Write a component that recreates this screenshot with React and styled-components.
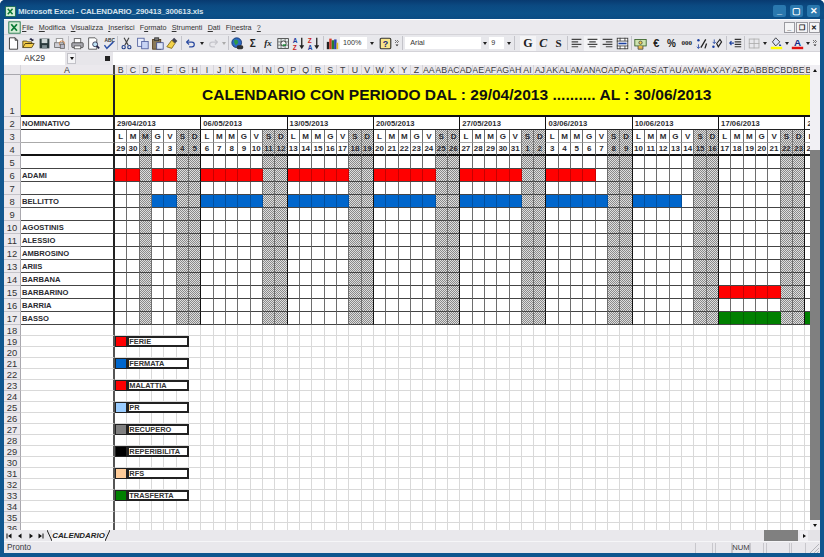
import React from 'react';
import styled, { createGlobalStyle } from 'styled-components';

const Global = createGlobalStyle`
  html, body { margin: 0; padding: 0; background: #fff; }
  * { box-sizing: border-box; }
`;
const Win = styled.div`
  width: 824px; height: 557px; display: flex; flex-direction: column; overflow: hidden;
  background: #10578f; border-radius: 5px 5px 0 0; padding: 0 4px 4px;
  font-family: "Liberation Sans", Arial, sans-serif; color: #222;
`;
const TitleBar = styled.div`
  height: 19px; margin: 0 -4px; padding: 3px 4px 0 5px; display: flex; align-items: center; gap: 2px;
  background: linear-gradient(#083a70 0, #0b4a82 30%, #0c5189 70%, #0b4c84 100%);
`;
const TitleText = styled.span`
  flex: 1; font-size: 7.9px; font-weight: 700; color: #d5e2ec; white-space: nowrap; letter-spacing: -0.02em;
`;
const CapBtn = styled.div`
  width: 13px; height: 12px; margin-left: 2px; background: #2a78ae; border-radius: 2px;
  color: #fff; font-size: 9px; font-weight: 700; display: flex; align-items: center; justify-content: center;
`;
const MenuBar = styled.div`
  height: 16px; background: #ebeaee; border-top: 1px solid #fff; border-bottom: 1px solid #d4d3d8;
  display: flex; align-items: center; padding-left: 4px;
`;
const MenuItems = styled.div`
  display: flex; gap: 5.2px; margin-left: 1px; flex: 1;
`;
const MenuItem = styled.span`
  font-size: 7.2px; color: #333; white-space: nowrap;
`;
const Key = styled.span` text-decoration: underline; `;
const DocBtns = styled.div` display: flex; gap: 1px; `;
const DocBtn = styled.div`
  width: 11.5px; height: 11px; background: #f4f4f6; border: 1px solid #9a9aa0; color: #111;
  font-size: 7px; font-weight: 700; line-height: 9px; text-align: center;
`;
const ToolBar = styled.div`
  height: 17px; background: #e8e8ec; border-bottom: 1px solid #d4d3d8; display: flex; align-items: center; padding-left: 2px;
`;
const Btn = styled.div`
  width: ${p => p.$w || 15.3}px; height: 15px; flex: none; display: flex; align-items: center; justify-content: center;
  background: ${p => p.$on ? '#f4f4f6' : 'transparent'}; overflow: hidden;
`;
const Sep = styled.div`
  width: ${p => p.$w || 3}px; height: 14px; flex: none;
  &::after { content: ""; display: block; width: 1px; height: 14px; background: #c4c4ca; margin-left: 1px; }
`;
const Caret = styled.div`
  width: ${p => p.$w || 8}px; flex: none; display: flex; justify-content: center;
  &::after { content: ""; border-left: 2.5px solid transparent; border-right: 2.5px solid transparent; border-top: 3px solid ${p => p.$dim ? '#aaa' : '#222'}; }
`;
const Combo = styled.div`
  width: ${p => p.$w}px; height: 12px; flex: none; background: #fff; font-size: 7.2px; color: #333; padding-left: ${p => p.$pad || 2}px; line-height: 12px; overflow: hidden;
`;
const TextTool = styled.span`
  font-family: ${p => p.$serif ? '"Liberation Serif", serif' : '"Liberation Sans", sans-serif'};
  font-size: ${p => p.$s || 11}px; font-weight: 700; font-style: ${p => p.$i ? 'italic' : 'normal'}; color: ${p => p.$c || '#222'};
`;
const FormulaBar = styled.div` height: 13px; background: #e7e6ea; display: flex; `;
const NameBox = styled.div`
  width: 61px; background: #fff; font-size: 8.6px; color: #333; text-align: center; line-height: 13px;
`;
const NameGrey = styled.div` flex: 1; display: flex; align-items: center; padding-left: 2px; `;
const Formula = styled.div` width: 707px; background: #fff; `;
const Square = styled.div` width: 4.5px; height: 4.5px; background: #222; margin-left: 29px; `;
const NameCaretBox = styled.div`
  width: 9px; height: 11px; background: #f4f4f6; border: 1px solid #c2c2c8; display: flex; align-items: center; justify-content: center;
`;
const SheetArea = styled.div` height: 465px; display: flex; background: #fff; `;
const Sheet = styled.div`
  width: 806px; height: 465px; overflow: hidden; display: grid;
  grid-template-columns: 17px 94px repeat(57, 12.33px);
  grid-template-rows: 10px 42px repeat(16, 13px) repeat(19, 11px);
  font-size: 7.6px; font-weight: 700;
`;
const HeadCell = styled.div`
  background: #ebe9ed; border-right: 1px solid #d6d5da; border-bottom: 1px solid #a9a8ae;
  font-size: 8.8px; font-weight: 400; color: #3a3a40; display: flex; justify-content: center; align-items: center;
  overflow: hidden; white-space: nowrap;
`;
const FrozenHead = styled(HeadCell)` border-right: 2px solid #444; `;
const RowHead = styled.div`
  background: #ebe9ed; border-right: 1px solid #a9a8ae; border-bottom: 1px solid #c4c3c9;
  font-size: 9.4px; color: #333; font-weight: 400; display: flex; justify-content: center; align-items: ${p => p.$end ? 'flex-end' : 'center'};
  overflow: hidden; line-height: 11px;
`;
const TitleCell = styled.div`
  grid-column: span 57; background: #ffff00; border-bottom: 2px solid #111;
  color: #111; font-size: 15.55px; white-space: nowrap; display: flex; align-items: center; padding-left: 87px; overflow: hidden;
`;
const ATitle = styled.div` background: #ffff00; border-right: 2px solid #222; border-bottom: 2px solid #111; `;
const NameCell = styled.div`
  background: #fff; border-right: 2px solid #222; border-bottom: 1px solid ${p => p.$line || '#444'};
  ${p => p.$thick ? 'border-bottom-width: 2px;' : ''}
  padding-left: 1px; display: flex; align-items: center; color: #2a2a30; white-space: nowrap;
`;
const WeekCell = styled.div`
  grid-column: span ${p => p.$span}; background: #fff; border-right: 1px solid #111; border-bottom: 1px solid #222;
  padding-left: 2px; color: #2a2a30; display: flex; align-items: center; white-space: nowrap; overflow: hidden; letter-spacing: 0.01em;
`;
const DayCell = styled.div`
  background: ${p => p.$fill || (p.$hatch ? 'repeating-conic-gradient(#8a8a8a 0 25%, #dedede 0 50%) 0 0 / 2px 2px' : '#fff')};
  border-right: 1px solid ${p => p.$weekEnd ? '#111' : (p.$fill ? 'rgba(0,0,0,.22)' : '#6e6e6e')};
  border-bottom: ${p => p.$thick ? 2 : 1}px solid ${p => p.$line};
  color: #2a2a30; display: flex; align-items: center; justify-content: center; overflow: hidden; white-space: nowrap;
  font-size: 8px;
`;
const FreeA = styled.div` background: #fff; border-right: 2px solid #555; border-bottom: 1px solid #d9d9d9; `;
const FreeCell = styled.div` background: #fff; border-right: 1px solid #d9d9d9; border-bottom: 1px solid #d9d9d9; `;
const LegendSwatch = styled.div` background: ${p => p.$c}; border: 1px solid #222; `;
const LegendLabel = styled.div`
  grid-column: span 5; background: #fff; border: 2px solid #222; color: #333; font-size: 7.4px; padding-left: 0;
  display: flex; align-items: center; white-space: nowrap; overflow: hidden;
`;
const VScroll = styled.div` width: 10px; display: flex; flex-direction: column; background: #f1f0f4; `;
const ScrollBtn = styled.div`
  flex: none; width: ${p => p.$w || 10}px; height: 10px; background: #f0eff3; display: flex; align-items: center; justify-content: center;
`;
const UpArrow = styled.div` border-left: 2.5px solid transparent; border-right: 2.5px solid transparent; border-bottom: 3px solid #111; `;
const DownArrow = styled.div` border-left: 2.5px solid transparent; border-right: 2.5px solid transparent; border-top: 3px solid #111; `;
const RightArrow = styled.div` border-top: 2.5px solid transparent; border-bottom: 2.5px solid transparent; border-left: 3px solid #111; `;
const VGap = styled.div` height: 75px; flex: none; `;
const VThumb = styled.div` height: 370px; background: #808080; flex: none; `;
const TabsRow = styled.div` height: 11px; background: #e9e8ec; display: flex; align-items: center; `;
const Nav = styled.div` width: 43px; flex: none; display: flex; `;
const NavBtn = styled.div`
  width: 10.7px; height: 10px; display: flex; align-items: center; justify-content: center;
`;
const TabSlash = styled.svg` width: 5px; height: 11px; flex: none; `;
const Tab = styled.div`
  flex: none; height: 11px; width: 53px; background: #f6f6f8; display: flex; align-items: center; justify-content: center; font-size: 7.9px; font-weight: 700; font-style: italic; color: #222;
`;
const HTrack = styled.div` flex: 1; height: 11px; background: #e9e8ec; display: flex; justify-content: flex-end; align-items: center; `;
const HThumb = styled.div` width: 34px; height: 11px; background: #808080; margin-right: 2px; `;
const HEnd = styled.div` width: 12px; height: 11px; background: #e4e3e7; flex: none; `;
const StatusBar = styled.div`
  height: 12px; background: #e9e8ec; border-top: 1px solid #f6f6f8; display: flex; align-items: center; font-size: 8.2px; color: #3a3a40;
`;
const StatusText = styled.div` flex: 1; padding-left: 3px; `;
const Panel = styled.div`
  flex: none; width: ${p => p.$w}px; height: 10px; margin-right: ${p => p.$m || 0}px; border-left: 1px solid #c8c7cc; border-right: 1px solid #c8c7cc;
  display: flex; align-items: center; justify-content: center; font-size: 7.6px;
`;
const Grip = styled.svg` width: 14px; height: 11px; flex: none; `;

const Icon = ({ children, s = 13 }) => <svg width={s} height={s} viewBox="0 0 16 16" style={{ display: 'block' }}>{children}</svg>;

const icons = {
  xl: <><rect x="1" y="1" width="14" height="14" fill="#d8efd8" stroke="#0d6b3a" /><path d="M4 4l7 8M11 4l-7 8" stroke="#0a7a35" strokeWidth="2.2" /></>,
  file: <path d="M3 1h7l3 3v11H3z M10 1v3h3" fill="#fff" stroke="#333" strokeWidth="1.1" />,
  open: <><path d="M1 13V5h5l1 1h5v2H4L1 13h11l3-5H4" fill="#f6cf4a" stroke="#4a3a10" /><path d="M9 3c1-2 3-2 4 0l1-1v3h-3l1-1" fill="#224" /></>,
  save: <><rect x="2" y="2" width="12" height="12" fill="#2a3a3c" /><rect x="4.5" y="2.5" width="7" height="5" fill="#cfd8d8" /><rect x="5" y="10" width="6" height="4" fill="#7d8c90" /></>,
  perm: <><rect x="2" y="7" width="11" height="6" fill="#cfcfd6" stroke="#666" /><rect x="4" y="2" width="8" height="5" fill="#fff" stroke="#888" /><circle cx="11" cy="8" r="3.2" fill="none" stroke="#c67a3a" /><rect x="9" y="9" width="5" height="5" fill="#b9b9c8" stroke="#666" /></>,
  print: <><rect x="1" y="7" width="14" height="6" rx="1" fill="#a9a9b0" stroke="#444" /><rect x="4" y="2" width="8" height="5" fill="#fff" stroke="#555" /><rect x="4" y="11" width="8" height="3.5" fill="#fff" stroke="#555" /></>,
  preview: <><path d="M2 1h8l2 2v12H2z" fill="#fff" stroke="#444" /><circle cx="10" cy="9" r="3" fill="#bfe3f5" stroke="#224" /><path d="M12 11l3 3" stroke="#224" strokeWidth="2" /></>,
  spell: <><text x="3" y="6" fontSize="6" fontWeight="700" fontFamily="Liberation Sans" fill="#333">ABC</text><path d="M3 10l3 4 8-8" fill="none" stroke="#2a4fa8" strokeWidth="1.8" /></>,
  cut: <><path d="M5 1l5 9M11 1L6 10" stroke="#444" strokeWidth="1.4" /><circle cx="4.5" cy="12.5" r="2" fill="none" stroke="#22408a" strokeWidth="1.4" /><circle cx="11.5" cy="12.5" r="2" fill="none" stroke="#22408a" strokeWidth="1.4" /></>,
  copy: <><rect x="2" y="1.5" width="8" height="10" fill="#e9eefc" stroke="#4a5a9a" /><rect x="7" y="5.5" width="8" height="9" fill="#c8d4f4" stroke="#4a5a9a" /></>,
  paste: <><rect x="2" y="3" width="10" height="12" fill="#8a7a5a" stroke="#4a3414" /><rect x="4.5" y="1" width="5" height="3.5" fill="#777" stroke="#333" /><rect x="7" y="7" width="8" height="8" fill="#dfe6f8" stroke="#3a4a8a" /></>,
  brush: <><path d="M10 1l4 4-3 3-4-4z" fill="#445" /><path d="M7 4l4 4-4 6-6-2z" fill="#f4d24a" stroke="#7a6210" /></>,
  undo: <path d="M2 6h8a3.5 3.5 0 010 7H6M2 6l4-3.5M2 6l4 3.5" fill="none" stroke="#2a4aa0" strokeWidth="1.8" />,
  redo: <path d="M14 6H6a3.5 3.5 0 000 7h4M14 6l-4-3.5M14 6l-4 3.5" fill="none" stroke="#c5c5cb" strokeWidth="1.8" />,
  web: <><circle cx="7" cy="7" r="6" fill="#2d6bc4" stroke="#14306a" /><path d="M4 3l4 1 1 3-3 3-2-3z" fill="#2f9a46" /><rect x="7" y="10" width="8" height="5" rx="2" fill="#333" /></>,
  find: <><rect x="1" y="2" width="13" height="12" fill="#e8f0ee" stroke="#333" /><path d="M1 6h13M1 10h13M5 2v12M10 2v12" stroke="#666" /><circle cx="8" cy="8" r="3.2" fill="#f6f6f6" stroke="#222" /><path d="M7 10l4 0" stroke="#1e8a3a" strokeWidth="2" /></>,
  az: <><text x="1" y="7.5" fontSize="8" fontWeight="700" fontFamily="Liberation Sans" fill="#1a3fa0">A</text><text x="1" y="15.5" fontSize="8" fontWeight="700" fontFamily="Liberation Sans" fill="#c81e1e">Z</text><path d="M12 1v11" stroke="#222" strokeWidth="1.6" /><path d="M9 10h6l-3 5z" fill="#222" /></>,
  za: <><text x="1" y="7.5" fontSize="8" fontWeight="700" fontFamily="Liberation Sans" fill="#c81e1e">Z</text><text x="1" y="15.5" fontSize="8" fontWeight="700" fontFamily="Liberation Sans" fill="#1a3fa0">A</text><path d="M12 1v11" stroke="#222" strokeWidth="1.6" /><path d="M9 10h6l-3 5z" fill="#222" /></>,
  chart: <><rect x="1" y="6" width="3" height="9" fill="#222" /><rect x="4" y="2" width="3" height="13" fill="#d43a2a" /><rect x="7" y="4" width="3" height="11" fill="#2a7a2a" /><rect x="10" y="3" width="3" height="12" fill="#2a3fb0" /><rect x="13" y="7" width="2" height="8" fill="#e8c020" /></>,
  help: <><rect x="1.5" y="1.5" width="13" height="13" rx="1.5" fill="#f8e58a" stroke="#333" strokeWidth="1.4" /><text x="8" y="12" fontSize="11" fontWeight="700" textAnchor="middle" fontFamily="Liberation Sans" fill="#1a2a7a">?</text></>,
  more: <><path d="M4 2l3 3-3 3M8 2l3 3-3 3" fill="none" stroke="#222" strokeWidth="1.2" /><path d="M5 11h6l-3 3.5z" fill="#222" /></>,
  left: <path d="M2 3h12M2 6h8M2 9h12M2 12h8" stroke="#444" strokeWidth="1.5" />,
  center: <path d="M2 3h12M4 6h8M2 9h12M4 12h8" stroke="#444" strokeWidth="1.5" />,
  right: <path d="M2 3h12M6 6h8M2 9h12M6 12h8" stroke="#444" strokeWidth="1.5" />,
  merge: <><rect x="1.5" y="1.5" width="13" height="13" fill="#fff" stroke="#333" /><path d="M1 5h14M1 11h14M5 1v4M11 1v4M5 11v4M11 11v4" stroke="#333" /><path d="M3 8h10" stroke="#1a3fa0" strokeWidth="2" /></>,
  money: <><rect x="1" y="3" width="14" height="8" fill="#cfe4b0" stroke="#2f5a20" /><circle cx="8" cy="7" r="2" fill="#f4d24a" stroke="#444" /><path d="M5 11v4h6v-4" fill="#e7b74a" stroke="#444" /></>,
  incdec: <><circle cx="3" cy="4" r="1.5" fill="#1a3fa0" /><path d="M6 13L12 3M13 8l-2 6" stroke="#222" strokeWidth="1.6" /><path d="M3 9v5M1 12l2 2 2-2" stroke="#1a3fa0" fill="none" /></>,
  decdec: <><circle cx="3" cy="12" r="1.5" fill="#1a3fa0" /><path d="M7 8l4-5 2 3-4 6z" fill="none" stroke="#222" strokeWidth="1.4" /><path d="M4 3v5M2 6l2 2 2-2" stroke="#1a3fa0" fill="none" /></>,
  indent: <><path d="M7 3h8M7 6h8M7 9h8M7 12h8" stroke="#333" strokeWidth="1.5" /><path d="M6 7.5H1M3 5L1 7.5 3 10" stroke="#1a3fa0" fill="none" strokeWidth="1.4" /></>,
  borders: <><rect x="1.5" y="2.5" width="12" height="11" fill="#e8e8ec" stroke="#aaa" /><path d="M7.5 2v12M1 8h13" stroke="#aaa" /></>,
  fill: <><path d="M7 1l5 5-5 5-4-5z" fill="#dfe6f8" stroke="#222" /><path d="M12 8l2 3h-3z" fill="#1a3fa0" /><rect x="1" y="12" width="14" height="3" fill="#ffff00" /></>,
  color: <><text x="8" y="10.5" fontSize="12" fontWeight="700" textAnchor="middle" fontFamily="Liberation Sans" fill="#102a8a">A</text><rect x="1" y="12" width="14" height="3" fill="#e01010" /></>,
  first: <path d="M3 3h2v10H3zM13 3v10L6 8z" fill="#111" />,
  prev: <path d="M11 3v10L4 8z" fill="#111" />,
  next: <path d="M5 3v10l7-5z" fill="#111" />,
  last: <path d="M3 3v10l7-5zM11 3h2v10h-2z" fill="#111" />,
};
const I = ({ n, $on, s }) => <Btn $on={$on}><Icon s={s}>{icons[n]}</Icon></Btn>;

const Letters = 'LMMGVSD';
const colName = i => {
  const n = i + 1;
  const A = 'ABCDEFGHIJKLMNOPQRSTUVWXYZ';
  return n < 26 ? A[n] : A[Math.floor(n / 26) - 1] + A[n % 26];
};
const dates = Array.from({ length: 57 }, (_, i) => new Date(Date.UTC(2013, 3, 29 + i)));
const fmt = d => `${String(d.getUTCDate()).padStart(2, '0')}/${String(d.getUTCMonth() + 1).padStart(2, '0')}/2013`;
const isHatch = i => i % 7 >= 5 || i === 2;
const RED = '#ff0000', BLUE = '#0066cc', GREEN = '#008000';
const fillFor = (row, i) => {
  const w = Math.floor(i / 7), d = i % 7;
  if (isHatch(i)) return null;
  if (row === 6) { if (w <= 4) return d < 5 ? RED : null; if (w === 5) return d < 4 ? RED : null; }
  if (row === 8) { if (i < 2) return null; if (w <= 5) return d < 5 ? BLUE : null; if (w === 6) return d < 4 ? BLUE : null; }
  if (row === 15 && w === 7 && d < 5) return RED;
  if (row === 17 && ((w === 7 && d < 5) || i === 56)) return GREEN;
  return null;
};
const names = { 6: 'ADAMI', 8: 'BELLITTO', 10: 'AGOSTINIS', 11: 'ALESSIO', 12: 'AMBROSINO', 13: 'ARIIS', 14: 'BARBANA', 15: 'BARBARINO', 16: 'BARRIA', 17: 'BASSO' };
const legend = { 19: ['FERIE', RED], 21: ['FERMATA', BLUE], 23: ['MALATTIA', RED], 25: ['PR', '#99ccff'], 27: ['RECUPERO', '#808080'], 29: ['REPERIBILITA', '#000'], 31: ['RFS', '#ffcc99'], 33: ['TRASFERTA', GREEN] };
const cols = Array.from({ length: 57 }, (_, i) => i);
const weekStarts = cols.filter(i => i % 7 === 0);

const DataRow = ({ r }) => (
  <>
    <RowHead>{r}</RowHead>
    <NameCell $thick={r === 4} $line={r === 3 ? '#aaa' : r === 4 ? '#111' : '#444'}>{names[r] || ''}</NameCell>
    {cols.map(i => (
      <DayCell key={i} $hatch={isHatch(i)} $weekEnd={i % 7 === 6} $fill={r > 4 ? fillFor(r, i) : null}
        $thick={r === 4} $line={r === 3 ? '#aaa' : r === 4 ? '#111' : '#444'}>
        {r === 3 ? Letters[i % 7] : r === 4 ? dates[i].getUTCDate() : ''}
      </DayCell>
    ))}
  </>
);
const FreeRow = ({ r }) => {
  const l = legend[r];
  return (
    <>
      <RowHead>{r}</RowHead>
      <FreeA />
      {l ? (
        <>
          <LegendSwatch $c={l[1]} />
          <LegendLabel>{l[0]}</LegendLabel>
          {cols.slice(6).map(i => <FreeCell key={i} />)}
        </>
      ) : cols.map(i => <FreeCell key={i} />)}
    </>
  );
};

export default function App() {
  const rows = Array.from({ length: 13 }, (_, i) => i + 5);
  const free = Array.from({ length: 19 }, (_, i) => i + 18);
  return (
    <Win>
      <Global />
      <TitleBar>
        <Icon s={11}>{icons.xl}</Icon>
        <TitleText>Microsoft Excel - CALENDARIO_290413_300613.xls</TitleText>
        <CapBtn>_</CapBtn>
        <CapBtn>▢</CapBtn>
        <CapBtn>✕</CapBtn>
      </TitleBar>
      <MenuBar>
        <Icon s={13}>{icons.xl}</Icon>
        <MenuItems>
          <MenuItem><Key>F</Key>ile</MenuItem>
          <MenuItem><Key>M</Key>odifica</MenuItem>
          <MenuItem><Key>V</Key>isualizza</MenuItem>
          <MenuItem><Key>I</Key>nserisci</MenuItem>
          <MenuItem>F<Key>o</Key>rmato</MenuItem>
          <MenuItem><Key>S</Key>trumenti</MenuItem>
          <MenuItem><Key>D</Key>ati</MenuItem>
          <MenuItem>Fi<Key>n</Key>estra</MenuItem>
          <MenuItem><Key>?</Key></MenuItem>
        </MenuItems>
        <DocBtns>
          <DocBtn>_</DocBtn>
          <DocBtn>❐</DocBtn>
          <DocBtn>✕</DocBtn>
        </DocBtns>
      </MenuBar>
      <ToolBar>
        <I n="file" /><I n="open" /><I n="save" /><I n="perm" /><Sep />
        <I n="print" /><I n="preview" /><I n="spell" /><Sep />
        <I n="cut" /><I n="copy" /><I n="paste" /><I n="brush" /><Sep />
        <I n="undo" s={11} /><Caret $w={7} /><I n="redo" s={11} /><Caret $w={6} $dim /><Sep />
        <I n="web" />
        <Btn><TextTool $s={10}>Σ</TextTool></Btn>
        <Btn><TextTool $s={9} $i $serif>fx</TextTool></Btn>
        <I n="find" /><I n="az" /><I n="za" /><Sep />
        <I n="chart" />
        <Combo $w={27} $pad={3}>100%</Combo><Caret $w={11} />
        <I n="help" />
        <Btn $w={8}><Icon s={10}>{icons.more}</Icon></Btn>
        <Sep $w={4} />
        <Combo $w={76} $pad={5}>Arial</Combo><Caret $w={8} />
        <Combo $w={15} $pad={2}>9</Combo><Caret $w={9} /><Sep $w={7} />
        <Btn $on><TextTool $serif $s={12}>G</TextTool></Btn>
        <Btn><TextTool $serif $i $s={12}>C</TextTool></Btn>
        <Btn><TextTool $serif $s={11}>S</TextTool></Btn><Sep />
        <I n="left" /><I n="center" $on /><I n="right" /><I n="merge" /><Sep />
        <I n="money" />
        <Btn><TextTool $s={11}>€</TextTool></Btn>
        <Btn><TextTool $s={10}>%</TextTool></Btn>
        <Btn><TextTool $s={7} $serif>000</TextTool></Btn>
        <I n="incdec" /><I n="decdec" /><Sep />
        <I n="indent" /><Sep />
        <I n="borders" /><Caret $w={7} />
        <I n="fill" /><Caret $w={6} />
        <I n="color" /><Caret $w={6} />
        <Btn $w={8}><Icon s={10}>{icons.more}</Icon></Btn>
      </ToolBar>
      <FormulaBar>
        <NameBox>AK29</NameBox>
        <NameGrey>
          <NameCaretBox><DownArrow /></NameCaretBox>
          <Square />
        </NameGrey>
        <Formula />
      </FormulaBar>
      <SheetArea>
        <Sheet>
          <HeadCell />
          <FrozenHead>A</FrozenHead>
          {cols.map(i => <HeadCell key={i}>{colName(i)}</HeadCell>)}
          <RowHead $end>1</RowHead>
          <ATitle />
          <TitleCell>CALENDARIO CON PERIODO DAL : 29/04/2013 .......... AL : 30/06/2013</TitleCell>
          <RowHead>2</RowHead>
          <NameCell $line="#222">NOMINATIVO</NameCell>
          {weekStarts.map(i => <WeekCell key={i} $span={i === 56 ? 1 : 7}>{fmt(dates[i])}</WeekCell>)}
          <DataRow r={3} />
          <DataRow r={4} />
          {rows.map(r => <DataRow key={r} r={r} />)}
          {free.map(r => <FreeRow key={r} r={r} />)}
        </Sheet>
        <VScroll>
          <ScrollBtn><UpArrow /></ScrollBtn>
          <VGap />
          <VThumb />
          <ScrollBtn><DownArrow /></ScrollBtn>
        </VScroll>
      </SheetArea>
      <TabsRow>
        <Nav>
          <NavBtn><Icon s={8}>{icons.first}</Icon></NavBtn>
          <NavBtn><Icon s={8}>{icons.prev}</Icon></NavBtn>
          <NavBtn><Icon s={8}>{icons.next}</Icon></NavBtn>
          <NavBtn><Icon s={8}>{icons.last}</Icon></NavBtn>
        </Nav>
        <TabSlash viewBox="0 0 5 11"><path d="M0 0l5 11" stroke="#222" fill="none" /></TabSlash>
        <Tab>CALENDARIO</Tab>
        <TabSlash viewBox="0 0 5 11"><path d="M5 0L0 11" stroke="#222" fill="none" /></TabSlash>
        <HTrack>
          <HThumb />
          <ScrollBtn $w={8}><RightArrow /></ScrollBtn>
        </HTrack>
        <HEnd />
      </TabsRow>
      <StatusBar>
        <StatusText>Pronto</StatusText>
        <Panel $w={18} $m={2} />
        <Panel $w={17} />
        <Panel $w={18}>NUM</Panel>
        <Panel $w={14} $m={2} />
        <Panel $w={24} $m={1} />
        <Panel $w={15} />
        <Grip viewBox="0 0 14 11"><path d="M13 2L4 11M13 6l-5 5M13 9l-2 2" stroke="#b5b5ba" strokeWidth="1" /></Grip>
      </StatusBar>
    </Win>
  );
}
